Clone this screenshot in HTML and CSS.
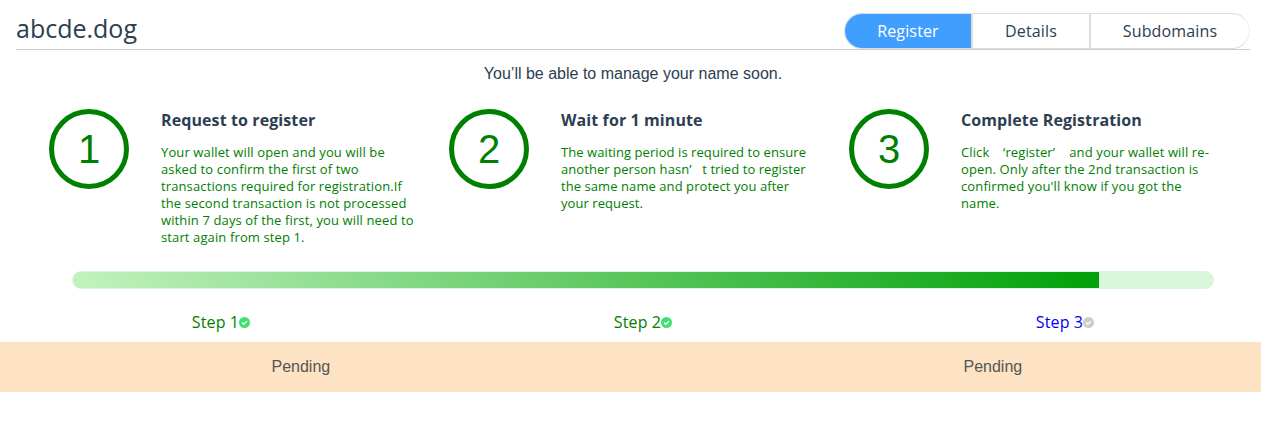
FILE: index.html
```html
<!DOCTYPE html>
<html lang="en">
<head>
<meta charset="utf-8">
<title>abcde.dog</title>
<link rel="stylesheet" href="styles.css">
</head>
<body>
<header class="header">
  <h1 class="domain">abcde.dog</h1>
  <nav class="tabs">
    <a class="tab tab-active"><span>Register</span></a>
    <a class="tab tab-details"><span>Details</span></a>
    <a class="tab tab-sub"><span>Subdomains</span></a>
  </nav>
</header>
<p class="notice">You’ll be able to manage your name soon.</p>
<section class="steps">
  <article class="step">
    <div class="circle">1</div>
    <div class="info">
      <h2>Request to register</h2>
      <p>Your wallet will open and you will be<br>asked to confirm the first of two<br>transactions required for registration.If<br>the second transaction is not processed<br>within 7 days of the first, you will need to<br>start again from step 1.</p>
    </div>
  </article>
  <article class="step">
    <div class="circle">2</div>
    <div class="info info-wait">
      <h2>Wait for 1 minute</h2>
      <p>The waiting period is required to ensure<br>another person hasn<span class="quote">’</span>t tried to register<br>the same name and protect you after<br>your request.</p>
    </div>
  </article>
  <article class="step">
    <div class="circle">3</div>
    <div class="info">
      <h2>Complete Registration</h2>
      <p>Click<span class="quote quote-open">‘</span>register<span class="quote">’</span> and your wallet will re-<br>open. Only after the 2nd transaction is<br>confirmed you'll know if you got the<br>name.</p>
    </div>
  </article>
</section>
<div class="track"><div class="bar"></div></div>
<div class="labels">
  <div class="label"><span>Step 1</span><svg class="check" viewBox="0 0 12 12"><circle cx="6" cy="6" r="6"/><path d="M3.3 6.1 5.2 8 8.8 4.5"/></svg></div>
  <div class="label"><span>Step 2</span><svg class="check" viewBox="0 0 12 12"><circle cx="6" cy="6" r="6"/><path d="M3.3 6.1 5.2 8 8.8 4.5"/></svg></div>
  <div class="label label-current"><span>Step 3</span><svg class="check" viewBox="0 0 12 12"><circle cx="6" cy="6" r="6"/><path d="M3.3 6.1 5.2 8 8.8 4.5"/></svg></div>
</div>
<div class="pending"><span>Pending</span><span>Pending</span></div>
</body>
</html>
```
FILE: styles.css
```css
* { box-sizing: border-box; }
body { margin: 0; height: 423px; overflow: hidden; background: #fff; color: #2c3e50; font-family: "Open Sans", "Noto Sans", sans-serif; }
h1, h2, p { margin: 0; font-weight: 400; }
.header { display: flex; justify-content: space-between; align-items: flex-start; margin: 0 20px 0 16px; height: 50px; padding-top: 13px; border-bottom: 1px solid #ccc; }
.domain { font-size: 25px; line-height: 31px; }
.tabs { display: flex; width: 406px; height: 36px; border: 1px solid #ddd; border-right-color: #eee; border-radius: 18px; overflow: hidden; }
.tab { display: flex; justify-content: center; align-items: center; font-size: 16px; letter-spacing: .15px; height: 34px; border-right: 2px solid #ddd; }
.tab-active { width: 128px; background: #409eff; color: #fff; }
.tab-details { width: 118px; }
.tab-sub { flex: 1; border: 0; }
.notice { margin-top: 14px; font: 16px/20px "Liberation Sans", Arial, sans-serif; text-align: center; padding-right: 4px; }
.steps { display: flex; height: 187px; padding: 25px 0 0 49px; }
.step { display: flex; width: 400px; gap: 32px; }
.circle { display: flex; flex: none; align-items: center; justify-content: center; width: 80px; height: 80px; border: 5px solid green; border-radius: 50%; color: green; font: 40px/70px "Liberation Sans", Arial, sans-serif; }
.info { white-space: nowrap; }
.info h2 { font-size: 16px; line-height: 22px; font-weight: 700; letter-spacing: .1px; }
.info p { margin-top: 13px; color: green; font-size: 13px; line-height: 17px; letter-spacing: .12px; }
.info-wait p { letter-spacing: .07px; }
.quote { display: inline-block; width: 13px; }
.quote-open { width: 16px; text-align: right; }
.track { width: 1142px; height: 18px; margin: 0 0 0 72px; padding: 1px; background: #d9f7d9; border-radius: 9px; }
.bar { width: 1026px; height: 16px; border-radius: 8px 0 0 8px; background: linear-gradient(45deg, #c3f3c0, #00a008); }
.labels { display: flex; height: 53px; }
.label { display: flex; align-items: center; justify-content: center; width: 422px; height: 24px; margin-top: 21px; color: green; font-size: 16px; letter-spacing: .12px; padding-left: 20px; }
.label-current { color: blue; }
.check { width: 11px; height: 11px; margin-top: 1px; fill: #43df6d; }
.check path { fill: none; stroke: #fff; stroke-width: 1.5; }
.label-current .check { fill: #ccc; }
.pending { display: flex; width: 1261px; height: 50px; background: #fde3c3; color: #555; font: 16px/50px "Liberation Sans", Arial, sans-serif; padding-left: 271.5px; }
.pending span { width: 692px; }
.pending span + span { width: auto; }
```
